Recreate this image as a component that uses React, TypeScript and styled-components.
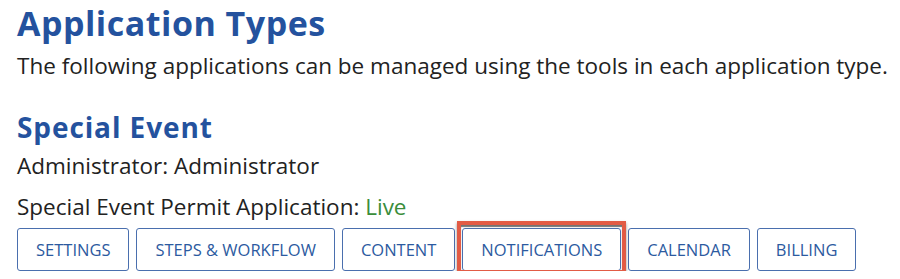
import React from 'react';
import styled, { createGlobalStyle } from 'styled-components';

const GlobalStyle = createGlobalStyle`
  html, body {
    margin: 0;
    padding: 0;
    background: #ffffff;
  }
  body {
    font-family: 'Open Sans', 'Liberation Sans', sans-serif;
    color: #222;
  }
`;

const StyledMain = styled.main`
  padding: 3px 0 0 17px;
`;

const StyledTitle = styled.h1`
  font-family: 'Open Sans', 'Liberation Sans', sans-serif;
  font-weight: 700;
  font-size: 34px;
  line-height: 40px;
  letter-spacing: 0.5px;
  color: #24529e;
  margin: 0;
`;

const StyledSubtitle = styled.h2`
  font-family: 'Open Sans', 'Liberation Sans', sans-serif;
  font-weight: 700;
  font-size: 28px;
  line-height: 34px;
  letter-spacing: 0.9px;
  color: #24529e;
  margin: 30px 0 0;
`;

const StyledText = styled.p<{ $top?: number }>`
  font-size: 22.5px;
  line-height: 28px;
  white-space: nowrap;
  margin: ${(p) => p.$top ?? 0}px 0 0;
  color: #222;
`;

const StyledLive = styled.span`
  color: #3a8d3a;
`;

const StyledToolbar = styled.div`
  display: flex;
  gap: 7px;
  margin-top: 7px;
`;

const StyledButton = styled.button`
  font-family: 'Open Sans', 'Liberation Sans', sans-serif;
  font-size: 16.5px;
  text-transform: uppercase;
  color: #2c5aa0;
  background: #fff;
  border: 1px solid #4a6fae;
  border-radius: 3px;
  height: 43px;
  padding: 0 18px;
  cursor: pointer;
`;

const StyledHighlight = styled.div`
  position: relative;
  display: flex;

  &::after {
    content: '';
    position: absolute;
    left: -5px;
    right: -5px;
    top: -7px;
    bottom: -3px;
    border: 4px solid #e25b45;
    box-shadow: 0 2px 3px rgba(0, 0, 0, 0.45), inset 0 2px 1px rgba(0, 0, 0, 0.55);
    pointer-events: none;
  }
`;

const tools = ['Settings', 'Steps & Workflow', 'Content', 'Notifications', 'Calendar', 'Billing'];

const App = () => {
  return (
    <>
      <GlobalStyle />
      <StyledMain>
        <StyledTitle>Application Types</StyledTitle>
        <StyledText $top={9}>
          The following applications can be managed using the tools in each application type.
        </StyledText>

        <StyledSubtitle>Special Event</StyledSubtitle>
        <StyledText $top={8}>Administrator: Administrator</StyledText>
        <StyledText $top={13}>
          Special Event Permit Application: <StyledLive>Live</StyledLive>
        </StyledText>

        <StyledToolbar>
          {tools.map((t) =>
            t === 'Notifications' ? (
              <StyledHighlight key={t}>
                <StyledButton>{t}</StyledButton>
              </StyledHighlight>
            ) : (
              <StyledButton key={t}>{t}</StyledButton>
            )
          )}
        </StyledToolbar>
      </StyledMain>
    </>
  );
};

export default App;
